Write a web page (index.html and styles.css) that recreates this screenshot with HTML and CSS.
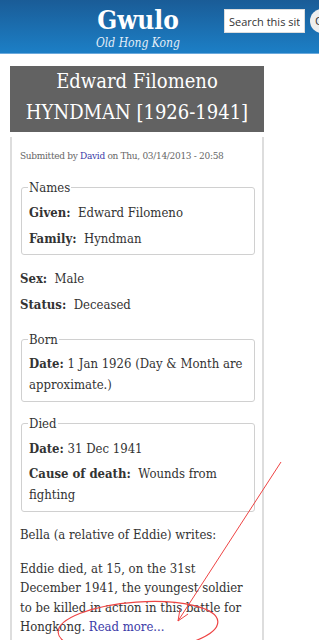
FILE: index.html
```html
<!DOCTYPE html>
<html lang="en">
<head>
    <meta charset="UTF-8">
    <meta name="viewport" content="width=device-width, initial-scale=1.0">
    <title>Edward Filomeno HYNDMAN [1926-1941] | Gwulo: Old Hong Kong</title>
    <link rel="stylesheet" href="styles.css">
</head>
<body>

<!-- Site header -->
<header class="site-header">
    <div class="brand">
        <div class="site-name">Gwulo</div>
        <div class="site-slogan">Old Hong Kong</div>
    </div>
    <form class="search">
        <input type="text" class="search-input" placeholder="Search this site">
        <button type="button" class="search-btn">Go</button>
    </form>
</header>

<div class="page">
    <h1 class="page-title">Edward Filomeno HYNDMAN [1926-1941]</h1>

    <div class="node">
        <p class="submitted">Submitted by <a href="#">David</a> on Thu, 03/14/2013 - 20:58</p>

        <fieldset class="group">
            <legend>Names</legend>
            <p class="field"><b>Given:</b>&nbsp; Edward Filomeno</p>
            <p class="field"><b>Family:</b>&nbsp; Hyndman</p>
        </fieldset>

        <p class="field loose"><b>Sex:</b>&nbsp; Male</p>
        <p class="field loose"><b>Status:</b>&nbsp; Deceased</p>

        <fieldset class="group">
            <legend>Born</legend>
            <p class="field tight"><b>Date:</b> 1 Jan 1926 (Day &amp; Month are approximate.)</p>
        </fieldset>

        <fieldset class="group">
            <legend>Died</legend>
            <p class="field"><b>Date:</b> 31 Dec 1941</p>
            <p class="field tight"><b>Cause of death:</b>&nbsp; Wounds from fighting</p>
        </fieldset>

        <p class="body-text">Bella (a relative of Eddie) writes:</p>
        <p class="body-text">Eddie died, at 15, on the 31st December 1941, the youngest soldier to be killed in action in this battle for Hongkong. <a href="#">Read more...</a></p>
    </div>
</div>

<!-- red hand-drawn note over the page -->
<svg class="scribble" width="319" height="640" viewBox="0 0 319 640">
    <path d="M281 462 L178 621" fill="none" stroke="#ee4444" stroke-width="1"/>
    <path d="M178 621 L180 609 M178 621 L188 614" fill="none" stroke="#ee4444" stroke-width="1"/>
    <ellipse cx="138" cy="627" rx="80" ry="25" transform="rotate(-4 138 627)" fill="none" stroke="#ee4444" stroke-width="1.2"/>
</svg>

</body>
</html>
```

FILE: styles.css
```css
body {
    margin: 0;
    font-family: "DejaVu Serif Condensed", "DejaVu Serif", serif;
    font-stretch: condensed;
    background-color: #fff;
    color: #333;
    overflow: hidden;
    position: relative;
}

/* header */
.site-header {
    display: flex;
    align-items: flex-start;
    height: 53px;
    background: linear-gradient(#1a5c97, #1c7fc6);
    border-bottom: 1px solid #6aa9dc;
    overflow: hidden;
}

.brand {
    margin-left: 92px;
    width: 92px;
    flex-shrink: 0;
    text-align: center;
    color: #fff;
}

.site-name {
    font-size: 26px;
    font-weight: bold;
    line-height: 30px;
    margin-top: 5px;
}

.site-slogan {
    font-size: 12px;
    font-style: italic;
    line-height: 14px;
    margin-top: 1px;
    color: #e4eef8;
}

.search {
    display: flex;
    align-items: center;
    margin: 9px 0 0 40px;
    flex-shrink: 0;
}

.search-input {
    width: 81px;
    height: 24px;
    box-sizing: border-box;
    border: 1px solid #ddd;
    padding: 0 4px;
    font-family: "Open Sans", sans-serif;
    font-size: 11px;
}

.search-input::placeholder {
    color: #333;
}

.search-btn {
    width: 24px;
    height: 24px;
    margin-left: 5px;
    border-radius: 50%;
    border: none;
    background-color: #eee;
    color: #333;
    font-size: 10px;
    padding: 0;
    flex-shrink: 0;
}

/* page */
.page {
    padding: 12px 55px 0 10px;
}

.page-title {
    margin: 0;
    padding: 0 4px 4px;
    background-color: #626262;
    color: #fff;
    font-weight: normal;
    font-size: 20px;
    line-height: 31px;
    text-align: center;
}

.node {
    margin-top: 5px;
    border-left: 2px solid #ddd;
    border-right: 2px solid #ddd;
    padding: 13px 8px 40px;
}

.submitted {
    margin: 0 0 19px;
    font-size: 10px;
    color: #666;
    letter-spacing: -0.3px;
}

.submitted a {
    color: #3b3ba8;
    text-decoration: none;
}

.group {
    margin: 0 -1px 0 1px;
    padding: 1px 7px 6px;
    border: 1px solid #d0d0d0;
    border-radius: 3px;
}

.group legend {
    padding: 0 1px;
    font-size: 13px;
    margin-left: -1px;
}

.field {
    margin: 7px 0 0;
    font-size: 13px;
    line-height: 19px;
}

.field.tight {
    line-height: 21px;
    margin-top: 5px;
}

.field.loose {
    margin-top: 7px;
}

.group + .loose {
    margin-top: 14px;
}

.loose + .group {
    margin-top: 18px;
}

.group + .group {
    margin-top: 14px;
}

.body-text {
    margin: 13px 0 0;
    font-size: 13px;
    line-height: 19.5px;
}

.body-text + .body-text {
    margin-top: 14px;
}

.body-text a {
    color: #3b3ba8;
    text-decoration: none;
}

.scribble {
    position: absolute;
    top: 0;
    left: 0;
    pointer-events: none;
}
```
